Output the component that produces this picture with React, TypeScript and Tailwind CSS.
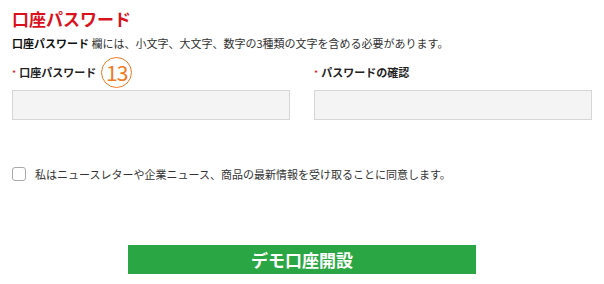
export default function App() {
  const jp = { fontFamily: '"Noto Sans CJK JP", "Noto Sans", sans-serif' }

  return (
    <div className="w-[604px] h-[284px] bg-white px-3 pt-[7px] text-[#222]" style={jp}>
      {/* Title */}
      <h2 className="h-[24px] leading-[24px] text-[17px] font-bold text-[#d9121d]">口座パスワード</h2>

      {/* Help text */}
      <p className="mt-[4px] h-[16px] leading-[16px] text-[11px] text-[#333]">
        <span className="font-bold text-[#111]">口座パスワード</span> 欄には、小文字、大文字、数字の3種類の文字を含める必要があります。
      </p>

      {/* Password fields */}
      <div className="mt-[6px] grid grid-cols-2 gap-x-6">
        <div>
          <div className="flex h-[31px] items-center">
            <span className="mr-[3px] mt-[2px] text-[9px] leading-none text-[#d9121d]">*</span>
            <span className="text-[11px] font-bold">口座パスワード</span>
            <span className="ml-[5px] flex h-[31px] w-[31px] items-center justify-center rounded-full border-[1.5px] border-[#f07a22] text-[21px] leading-none tracking-[-1px] text-[#f07a22]">
              13
            </span>
          </div>
          <div className="mt-[2px] h-[30px] border border-[#d6d6d6] bg-[#f4f4f4]" />
        </div>
        <div>
          <div className="flex h-[31px] items-center">
            <span className="mr-[3px] mt-[2px] text-[9px] leading-none text-[#d9121d]">*</span>
            <span className="text-[11px] font-bold">パスワードの確認</span>
          </div>
          <div className="mt-[2px] h-[30px] border border-[#d6d6d6] bg-[#f4f4f4]" />
        </div>
      </div>

      {/* Newsletter consent */}
      <label className="mt-[47px] flex h-[14px] items-center">
        <span className="h-[14px] w-[14px] rounded-[3px] border border-[#aaa] bg-white" />
        <span className="ml-[9px] text-[11px] text-[#333]">
          私はニュースレターや企業ニュース、商品の最新情報を受け取ることに同意します。
        </span>
      </label>

      {/* Submit */}
      <button className="mx-auto mt-[64px] flex h-[29px] w-[348px] items-center justify-center bg-[#2aa744] text-[17px] font-bold text-white">
        デモ口座開設
      </button>
    </div>
  )
}
